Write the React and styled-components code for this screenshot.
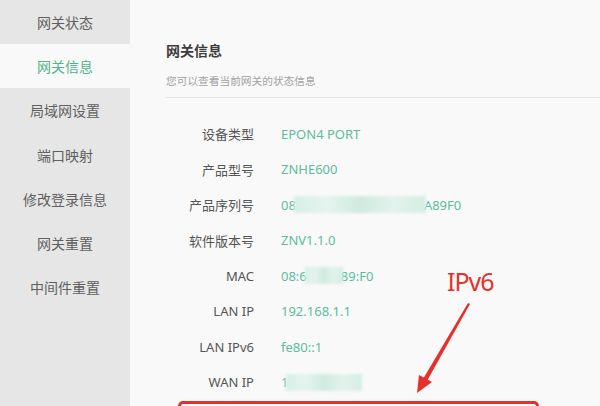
import React from "react";
import styled, { createGlobalStyle } from "styled-components";

const Global = createGlobalStyle`
  html, body { margin: 0; padding: 0; }
  body {
    width: 600px; height: 406px; overflow: hidden;
    font-family: "Noto Sans", "Noto Sans CJK SC", sans-serif;
    background: #f9f9f9;
  }
`;

const Page = styled.div`
  position: relative;
  display: flex;
  width: 600px;
  height: 406px;
  overflow: hidden;
`;

const Sidebar = styled.nav`
  width: 130px;
  flex: none;
  background: #e6e6e6;
  display: flex;
  flex-direction: column;
`;

const NavItem = styled.div`
  height: 44.2px;
  display: flex;
  align-items: center;
  justify-content: center;
  font-size: 14px;
  color: ${(p) => (p.$active ? "#4fb488" : "#5f5f5f")};
  background: ${(p) => (p.$active ? "#f9f9f9" : "transparent")};
  font-family: "Noto Sans CJK SC", sans-serif;
`;

const Main = styled.main`
  flex: 1;
  background: #f9f9f9;
  padding: 40px 0 0 36px;
`;

const Title = styled.h2`
  margin: 0;
  font-size: 14px;
  line-height: 20px;
  font-weight: 700;
  color: #3c3c3c;
  font-family: "Noto Sans CJK SC", sans-serif;
`;

const Sub = styled.p`
  margin: 13px 0 0;
  font-size: 10.7px;
  line-height: 16px;
  color: #a3a3a3;
  font-family: "Noto Sans CJK SC", sans-serif;
`;

const Divider = styled.div`
  height: 1px;
  background: #e3e3e3;
  margin-top: 8px;
`;

const Table = styled.div`
  padding-top: 18px;
  display: flex;
  flex-direction: column;
`;

const Row = styled.div`
  height: 35.5px;
  display: flex;
  align-items: center;
  gap: 27px;
  font-size: 13px;
`;

const Label = styled.span`
  width: 88px;
  text-align: right;
  color: #555;
  font-family: "Noto Sans", "Noto Sans CJK SC", sans-serif;
`;

const Value = styled.span`
  color: #5bbd9d;
  display: inline-flex;
  align-items: center;
  font-family: "Noto Sans", sans-serif;
`;

const Blur = styled.span`
  display: inline-block;
  width: ${(p) => p.$w}px;
  height: 17px;
  margin: 0 -2px;
  background: linear-gradient(90deg, #d6efe6 0%, #e4f4ee 25%, #cfeadf 50%, #e2f3ec 75%, #d3ede3 100%);
  filter: blur(1.5px);
`;

const Annotation = styled.div`
  position: absolute;
  left: 447px;
  top: 264px;
  font-size: 25px;
  line-height: 34px;
  letter-spacing: -1px;
  color: #e8302a;
  font-family: "Noto Sans", sans-serif;
`;

const Arrow = styled.svg`
  position: absolute;
  left: 400px;
  top: 295px;
`;

const RedBox = styled.div`
  position: absolute;
  left: 178px;
  top: 401px;
  width: 355px;
  height: 30px;
  border: 3px solid #e8302a;
  border-radius: 5px;
`;

const navItems = ["网关状态", "网关信息", "局域网设置", "端口映射", "修改登录信息", "网关重置", "中间件重置"];

export default function App() {
  return (
    <Page>
      <Global />
      <Sidebar>
        {navItems.map((t) => (
          <NavItem key={t} $active={t === "网关信息"}>{t}</NavItem>
        ))}
      </Sidebar>
      <Main>
        <Title>网关信息</Title>
        <Sub>您可以查看当前网关的状态信息</Sub>
        <Divider />
        <Table>
          <Row><Label>设备类型</Label><Value>EPON4 PORT</Value></Row>
          <Row><Label>产品型号</Label><Value>ZNHE600</Value></Row>
          <Row><Label>产品序列号</Label><Value>08<Blur $w={132} />A89F0</Value></Row>
          <Row><Label>软件版本号</Label><Value>ZNV1.1.0</Value></Row>
          <Row><Label>MAC</Label><Value>08:6<Blur $w={38} />89:F0</Value></Row>
          <Row><Label>LAN IP</Label><Value>192.168.1.1</Value></Row>
          <Row><Label>LAN IPv6</Label><Value>fe80::1</Value></Row>
          <Row><Label>WAN IP</Label><Value>1<Blur $w={76} /></Value></Row>
        </Table>
      </Main>
      <Annotation>IPv6</Annotation>
      <Arrow width="80" height="105" viewBox="0 0 80 105">
        <polygon points="68,8 70,9 27,86 23,84" fill="#e8302a" />
        <polygon points="17,98 19,80 32,87" fill="#e8302a" />
      </Arrow>
      <RedBox />
    </Page>
  );
}
